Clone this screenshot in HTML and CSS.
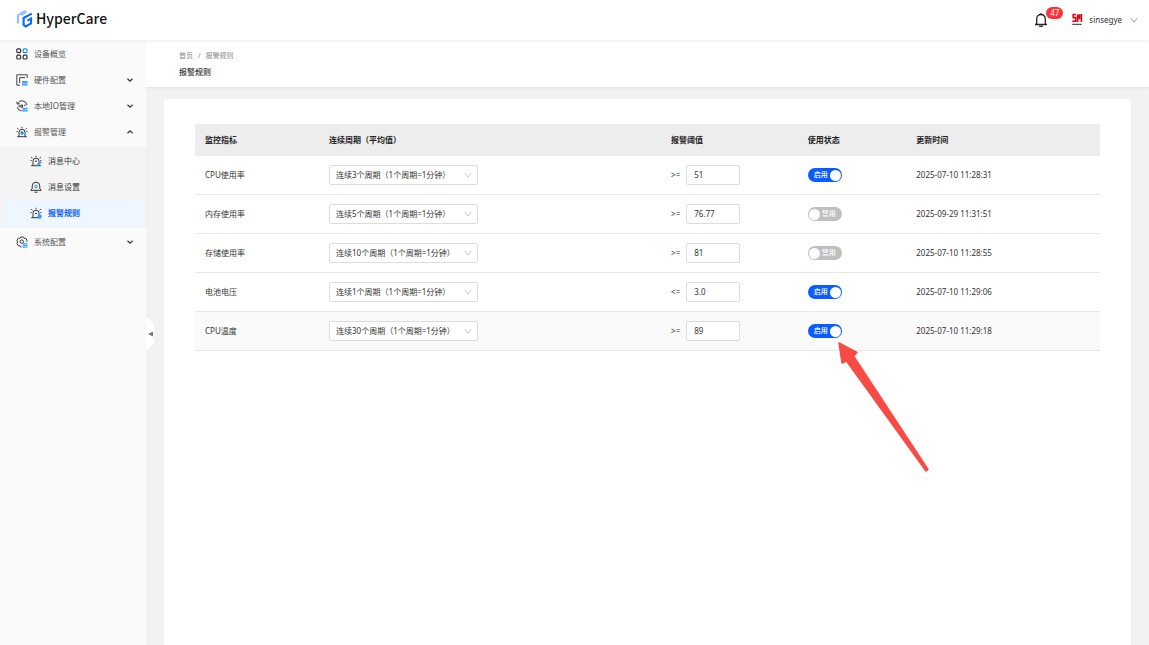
FILE: index.html
```
<!DOCTYPE html>
<html lang="zh-CN">
<head>
  <meta charset="UTF-8">
  <title>HyperCare - 报警规则</title>
  <link rel="stylesheet" href="styles.css">
</head>
<body>

<!-- 公用图标 -->
<svg class="sprite" aria-hidden="true">
  <symbol id="down" viewBox="0 0 8 8"><path d="M1.5 2.8 4 5.2l2.5-2.4" fill="none" stroke="currentColor" stroke-width="1.2"/></symbol>
  <symbol id="up" viewBox="0 0 8 8"><path d="M1.5 5.2 4 2.8l2.5 2.4" fill="none" stroke="currentColor" stroke-width="1.2"/></symbol>
  <symbol id="arrow" viewBox="0 0 8 8"><path d="M.8 2 4 6.2 7.2 2" fill="none" stroke="currentColor" stroke-width=".8"/></symbol>
  <symbol id="alarm" viewBox="0 0 12 12">
    <path d="M3 10.5V6.2a3 3 0 0 1 6 0v4.3M1.2 10.7h9.6M6 .8v1.4M1.2 2.2l1.3 1.1M10.8 2.2 9.5 3.3M.5 5.6h1.2M10.3 5.6h1.2" fill="none" stroke="#333"/>
  </symbol>
</svg>

<header class="topbar">
  <a class="logo" href="#">
    <svg width="18" height="18" viewBox="0 0 18 18">
      <path d="M2 13.5V5.2L8.600 1.300l2.200 1" fill="none" stroke="#8fbcff" stroke-width="2"/>
      <path d="M5.200 5.200 9 3.200" fill="none" stroke="#5a9dff" stroke-width="1"/>
      <path d="M15.800 3.600 7.600 8v7l2.200 1.400 5.200-3V8.600l-3.600 2" fill="none" stroke="#0b6cff" stroke-width="2.200"/>
    </svg>
    <span>HyperCare</span>
  </a>
  <div class="user">
    <button class="bell" aria-label="消息">
      <svg width="14" height="16" viewBox="0 0 14 16">
        <path d="M1 12.5h12M2.7 12.5V6.8a4.3 4.3 0 0 1 8.6 0v5.7M7 2.5V1M5.2 14.3h3.6" fill="none" stroke="#222" stroke-width="1.3"/>
      </svg>
      <span class="badge">47</span>
    </button>
    <button class="account">
      <svg width="12" height="14" viewBox="0 0 12 14">
        <path d="M5 1.5H2.200V4.600h2.500v3.600H1.200M6.600 9V1.500l2 4.500V1.200M10.400 1v8" fill="none" stroke="#e60012" stroke-width="1.600"/>
        <path d="M1.500 11.300h9" stroke="#222" stroke-width="1.200" stroke-dasharray="1.5 .4"/>
      </svg>
      <span>sinsegye</span>
      <svg class="caret" width="8" height="8"><use href="#arrow"/></svg>
    </button>
  </div>
</header>

<div class="layout">
  <nav class="sidebar">
    <a class="item" href="#">
      <svg width="12" height="12" viewBox="0 0 12 12" fill="none" stroke-width="1.2">
        <rect x=".8" y=".8" width="3.8" height="3.8" rx="1" stroke="#333"/>
        <rect x="7.2" y=".8" width="3.8" height="3.8" rx="1" stroke="#1890ff"/>
        <rect x=".8" y="7.2" width="3.8" height="3.8" rx="1" stroke="#333"/>
        <rect x="7.2" y="7.2" width="3.8" height="3.8" rx="1" stroke="#333"/>
      </svg>
      <span>设备概览</span>
    </a>
    <button class="item">
      <svg width="12" height="12" viewBox="0 0 12 12">
        <path d="M11.2 4V.8H.8v10.4H4M3.6 9V3.6H9" fill="none" stroke="#444"/>
        <path d="M6 7h5.5v2H6zM6 9.500h5.500v2H6z" fill="#40a0ff"/>
      </svg>
      <span>硬件配置</span>
      <svg class="fold" width="8" height="8"><use href="#down"/></svg>
    </button>
    <button class="item">
      <svg width="12" height="12" viewBox="0 0 12 12">
        <path d="M1.4 4A5 5 0 0 1 11 5.2M.7 1.8l.7 2.4 2.3-.5M5.5 11A5 5 0 0 1 1.2 7.2M3.2 5v2.2M4.8 5.1v2h1.8v-2zM8 5.2h1.5" fill="none" stroke="#333"/>
        <path d="M6.2 7.8h5.4v1.6H6.2zM6.2 10h5.4v1.6H6.2z" fill="#40a0ff"/>
      </svg>
      <span>本地IO管理</span>
      <svg class="fold" width="8" height="8"><use href="#down"/></svg>
    </button>
    <button class="item">
      <svg width="12" height="12" viewBox="0 0 12 12"><use href="#alarm"/><path d="M6 4.500 8 7 6 9.300 4 7z" fill="#1890ff"/></svg>
      <span>报警管理</span>
      <svg class="fold" width="8" height="8"><use href="#up"/></svg>
    </button>
    <div class="submenu">
      <a class="item" href="#">
        <svg width="12" height="12" viewBox="0 0 12 12"><use href="#alarm"/><path d="M5 6.2h2" stroke="#333"/><path d="m6.300 11.800.4-2.400L10.200 6l1.600 1.500-3.400 3.500z" fill="#40a0ff"/></svg>
        <span>消息中心</span>
      </a>
      <a class="item" href="#">
        <svg width="12" height="12" viewBox="0 0 12 12">
          <path d="M.8 9.300h10.400L9.800 7.500V5a3.800 3.800 0 0 0-7.600 0v2.500zM4.500 11.200h3" fill="none" stroke="#333"/>
          <circle cx="6" cy="5.500" r="1.300" fill="none" stroke="#1890ff"/>
        </svg>
        <span>消息设置</span>
      </a>
      <a class="item active" href="#">
        <svg width="12" height="12" viewBox="0 0 12 12"><use href="#alarm"/><path d="M5 6.500h2" stroke="#333"/><circle cx="9.500" cy="9.500" r="2.200" fill="#40a0ff"/></svg>
        <span>报警规则</span>
      </a>
    </div>
    <button class="item">
      <svg width="12" height="12" viewBox="0 0 12 12">
        <path d="M5.500 11 4.400 10.800 3.800 9.600 2.300 9.700.9 7.600 1.700 6 .9 4.400 2.300 2.300l1.500.1L4.600 1h2.800l.8 1.400 1.500-.1 1.400 2.100-.6 1.200" fill="none" stroke="#333"/>
        <circle cx="5.800" cy="5.600" r="1.700" fill="none" stroke="#333"/>
        <path d="M6.500 7.200h5v1.200h-5zM6.500 8.900h5v1.200h-5zM6.500 10.600h5v1.200h-5z" fill="#40a0ff"/>
      </svg>
      <span>系统配置</span>
      <svg class="fold" width="8" height="8"><use href="#down"/></svg>
    </button>
    <button class="collapse" aria-label="收起菜单"><svg width="5" height="6" viewBox="0 0 5 6"><path d="M0 3 5 .5v5z" fill="#777"/></svg></button>
  </nav>

  <main class="main">
    <div class="page-head">
      <div class="breadcrumb"><a href="#">首页</a><i>/</i><span>报警规则</span></div>
      <h1>报警规则</h1>
    </div>

    <div class="card">
      <table>
        <colgroup>
          <col class="c-name"><col class="c-cycle"><col class="c-limit"><col class="c-state"><col>
        </colgroup>
        <thead>
          <tr>
            <th>监控指标</th>
            <th>连续周期（平均值）</th>
            <th>报警阈值</th>
            <th>使用状态</th>
            <th>更新时间</th>
          </tr>
        </thead>
        <tbody>
          <tr>
            <td>CPU使用率</td>
            <td><div class="select"><select aria-label="CPU使用率周期"><option>连续3个周期（1个周期=1分钟）</option></select><svg width="8" height="8"><use href="#arrow"/></svg></div></td>
            <td><label class="limit"><span>&gt;=</span><input type="text" value="51"></label></td>
            <td><label class="switch"><input type="checkbox" checked><span class="on">启用</span><span class="off">禁用</span></label></td>
            <td>2025-07-10 11:28:31</td>
          </tr>
          <tr>
            <td>内存使用率</td>
            <td><div class="select"><select aria-label="内存使用率周期"><option>连续5个周期（1个周期=1分钟）</option></select><svg width="8" height="8"><use href="#arrow"/></svg></div></td>
            <td><label class="limit"><span>&gt;=</span><input type="text" value="76.77"></label></td>
            <td><label class="switch"><input type="checkbox"><span class="on">启用</span><span class="off">禁用</span></label></td>
            <td>2025-09-29 11:31:51</td>
          </tr>
          <tr>
            <td>存储使用率</td>
            <td><div class="select"><select aria-label="存储使用率周期"><option>连续10个周期（1个周期=1分钟）</option></select><svg width="8" height="8"><use href="#arrow"/></svg></div></td>
            <td><label class="limit"><span>&gt;=</span><input type="text" value="81"></label></td>
            <td><label class="switch"><input type="checkbox"><span class="on">启用</span><span class="off">禁用</span></label></td>
            <td>2025-07-10 11:28:55</td>
          </tr>
          <tr>
            <td>电池电压</td>
            <td><div class="select"><select aria-label="电池电压周期"><option>连续1个周期（1个周期=1分钟）</option></select><svg width="8" height="8"><use href="#arrow"/></svg></div></td>
            <td><label class="limit"><span>&lt;=</span><input type="text" value="3.0"></label></td>
            <td><label class="switch"><input type="checkbox" checked><span class="on">启用</span><span class="off">禁用</span></label></td>
            <td>2025-07-10 11:29:06</td>
          </tr>
          <tr class="current">
            <td>CPU温度</td>
            <td><div class="select"><select aria-label="CPU温度周期"><option>连续30个周期（1个周期=1分钟）</option></select><svg width="8" height="8"><use href="#arrow"/></svg></div></td>
            <td><label class="limit"><span>&gt;=</span><input type="text" value="89"></label></td>
            <td>
              <label class="switch"><input type="checkbox" checked><span class="on">启用</span><span class="off">禁用</span>
                <svg class="pointer" width="92" height="132" viewBox="0 0 92 132"><path d="M1 1 19 10.500 15.500 14 90 127.500 88 129 8.500 19 4 21z" fill="#f94b46" stroke="#f94b46" stroke-width="1.500" stroke-linejoin="round"/></svg>
              </label>
            </td>
            <td>2025-07-10 11:29:18</td>
          </tr>
        </tbody>
      </table>
    </div>
  </main>
</div>

</body>
</html>
```
FILE: styles.css
```
* {
  box-sizing: border-box;
}
body {
  margin: 0;
  min-height: 100vh;
  display: flex;
  flex-direction: column;
  font-family: "Noto Sans", "Noto Sans CJK SC", sans-serif;
  font-size: 8px;
  line-height: 12px;
  color: #333;
  background: #f2f2f2;
}
button, select, input {
  font: inherit;
  color: inherit;
  margin: 0;
}
button {
  border: none;
  background: none;
  padding: 0;
  cursor: pointer;
}
a {
  color: inherit;
  text-decoration: none;
}
svg {
  display: block;
  flex: none;
}
.sprite {
  position: absolute;
  width: 0;
  height: 0;
}

/* 顶栏 */
.topbar {
  position: relative;
  z-index: 2;
  height: 40px;
  padding: 0 11px 0 16px;
  display: flex;
  align-items: center;
  justify-content: space-between;
  background: #fff;
  box-shadow: 0 1px 3px rgba(0, 0, 0, 0.08);
}
.logo {
  display: flex;
  align-items: center;
  gap: 2px;
  padding-bottom: 3px;
  font-family: "Noto Sans CJK SC", sans-serif;
  font-size: 14px;
  font-weight: 500;
  line-height: 17px;
  color: #111;
}
.user, .account {
  display: flex;
  align-items: center;
}
.user {
  gap: 23px;
}
.account {
  gap: 6px;
}
.caret {
  margin-left: 2px;
  color: #888;
}
.bell {
  position: relative;
}
.badge {
  position: absolute;
  left: 12px;
  top: -5px;
  width: 17px;
  height: 12px;
  border-radius: 6px;
  background: #ff3037;
  color: #fff;
}

/* 左侧菜单 */
.layout {
  flex: 1;
  display: flex;
}
.sidebar {
  position: relative;
  flex: none;
  width: 146px;
  padding-top: 1px;
  background: #fafafa;
}
.item {
  display: flex;
  align-items: center;
  gap: 6px;
  width: 100%;
  height: 26px;
  padding: 0 12px 0 16px;
  color: #555;
}
.fold {
  margin-left: auto;
  color: #333;
}
.submenu {
  margin: 2px 0 1px;
  padding: 1px 2px 2px 3px;
  background: #f4f4f4;
}
.submenu .item {
  padding-left: 27px;
  border-radius: 4px;
  color: #333;
}
.submenu .active {
  background: #eef6ff;
  color: #0b5cff;
  font-weight: 700;
}
.collapse {
  position: absolute;
  left: 100%;
  top: 277px;
  width: 8px;
  height: 33px;
  padding-left: 2px;
  background: #fff;
  clip-path: polygon(0 0, 100% 20%, 100% 80%, 0 100%);
}

/* 内容区 */
.main {
  flex: 1;
  display: flex;
  flex-direction: column;
}
.page-head {
  padding: 10px 33px;
  height: 47px;
  background: #fff;
  box-shadow: 0 1px 3px rgba(0, 0, 0, 0.08);
}
.breadcrumb {
  display: flex;
  gap: 5px;
  font-size: 7px;
  color: #888;
}
.breadcrumb i {
  font-style: normal;
}
h1 {
  margin: 4px 0 0;
  font-size: 8px;
  font-weight: 500;
  line-height: 12px;
}
.card {
  flex: 1;
  margin: 12px 18px 0;
  padding: 25px 31px;
  background: #fff;
  border-radius: 2px 2px 0 0;
}
table {
  width: 100%;
  table-layout: fixed;
  border-collapse: separate;
  border-spacing: 0;
}
.c-name { width: 13.7%; }
.c-cycle { width: 37.8%; }
.c-limit { width: 15.1%; }
.c-state { width: 12%; }
th {
  height: 32px;
  padding: 0 10px;
  text-align: left;
  background: #ededed;
  color: #222;
}
th:first-child {
  border-top-left-radius: 2px;
}
th:last-child {
  border-top-right-radius: 2px;
}
td {
  height: 39px;
  padding: 0 10px;
  border-bottom: 1px solid #e8e8e8;
}
.current td {
  background: #fafafa;
}
.select {
  position: relative;
  width: 149px;
}
.select select {
  display: block;
  width: 100%;
  height: 20px;
  padding: 0 16px 0 6px;
  border: 1px solid #ddd;
  border-radius: 2px;
  background: #fff;
  appearance: none;
}
.select svg {
  position: absolute;
  right: 6px;
  top: 6px;
  color: #bbb;
  pointer-events: none;
}
.limit {
  display: flex;
  align-items: center;
  gap: 6px;
}
.limit input {
  width: 54px;
  height: 20px;
  padding: 0 7px 2px;
  border: 1px solid #ddd;
  border-radius: 2px;
  background: #fff;
}
.switch {
  position: relative;
  display: block;
  width: 34px;
  height: 14px;
  color: #fff;
}
.switch input {
  display: flex;
  align-items: center;
  width: 34px;
  height: 14px;
  padding: 0 1px;
  border-radius: 7px;
  background: #bfbfbf;
  appearance: none;
}
.switch input::before {
  content: "";
  width: 11px;
  height: 11px;
  border-radius: 50%;
  background: #fff;
}
.switch input:checked {
  background: #0b5cff;
  justify-content: flex-end;
}
.switch span {
  position: absolute;
  top: 1px;
  font-size: 7px;
  font-weight: 500;
}
.on {
  left: 6px;
}
.off {
  right: 6px;
}
.switch input:checked ~ .off,
.switch input:not(:checked) ~ .on {
  display: none;
}
.pointer {
  position: absolute;
  left: 30px;
  top: 18px;
  z-index: 1;
  pointer-events: none;
}
```
